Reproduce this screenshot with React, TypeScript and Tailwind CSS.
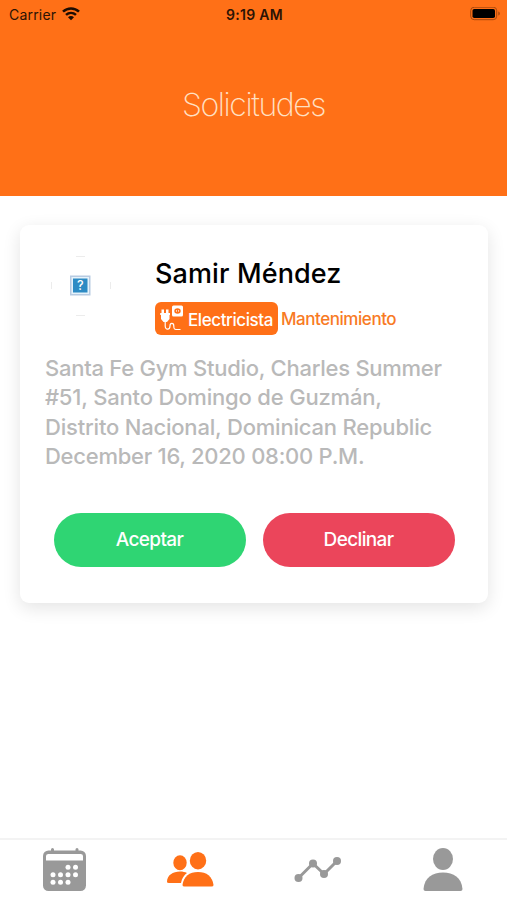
const address = [
	{ text: "Santa Fe Gym Studio, Charles Summer", spacing: "tracking-[-0.26px]" },
	{ text: "#51, Santo Domingo de Guzmán,", spacing: "tracking-[-0.18px]" },
	{ text: "Distrito Nacional, Dominican Republic", spacing: "tracking-[-0.2px]" },
	{ text: "December 16, 2020 08:00 P.M.", spacing: "tracking-[-0.26px]" },
];

const calendarDots = [
	[25.5, 20], [33, 20],
	[10.5, 27.5], [18, 27.5], [25.5, 27.5], [33, 27.5],
	[10.5, 35], [18, 35], [25.5, 35],
];

function StatusBar() {
	return (
		<div className="grid grid-cols-3 items-center h-7 pl-[9px] pr-[7px] text-[14px] text-[#2b1305]">
			<div className="flex items-center gap-[6px]">
				<span className="tracking-[0.2px]">Carrier</span>
				<svg width="18" height="14" viewBox="0 0 18 14" fill="none" stroke="#1d0c02" strokeWidth="2.5">
					<path d="M1 4.7C5.5.3 12.5.3 17 4.7" />
					<path d="M4 7.9c2.9-2.7 7.1-2.7 10 0" />
					<path d="M6 10.3c1.700-1.700 4.300-1.700 6 0L9 13.300z" fill="#1d0c02" stroke="none" />
				</svg>
			</div>
			<span className="text-center font-semibold whitespace-nowrap tracking-[0.3px]">9:19 AM</span>
			<svg className="justify-self-end" width="30" height="14" viewBox="0 0 30 14">
				<rect x="0.7" y="0.2" width="26" height="12.5" rx="3.5" fill="none" stroke="#a5480f" />
				<rect x="2.5" y="2" width="22.5" height="9" rx="1.8" fill="#000" />
				<path d="M28.3 4.5c2 .7 2 3.400 0 4.100z" fill="#a5480f" />
			</svg>
		</div>
	);
}

function PlugIcon() {
	return (
		<svg width="25" height="26" viewBox="0 0 25 26" fill="#fff">
			<path d="M2.500 4.500h2.500v3.500h2V4.500h2.500v3.500h1.500v2h-.5v4L8 17H4.500L2 14v-4h-.8V8h1.300z" />
			<path d="M6.200 16v5c0 4.500 4.800 4 4.800 0 0-3.500 3.800-3.500 3.800 0 0 3 .5 3.500 2.200 3.500h4.500" fill="none" stroke="#fff" strokeWidth="1.200" />
			<rect x="13" y="0.500" width="11" height="11" rx="1.500" />
			<ellipse cx="18.500" cy="6" rx="3.200" ry="2.700" fill="#ff7017" />
			<path d="M17.500 5v1.800M19.500 5v1.800" stroke="#fff" strokeWidth="0.700" />
		</svg>
	);
}

function Avatar() {
	return (
		<svg width="60" height="60" viewBox="0 0 60 60">
			<path d="M25 .5h9M25 59.500h9M.5 26v7M59.500 26v7" stroke="#ececec" />
			<rect x="19" y="19.500" width="20.500" height="20" fill="#b8cbe2" />
			<rect x="20.500" y="21" width="17.500" height="17" fill="#e6f3fb" />
			<rect x="22" y="22.500" width="14.500" height="14" fill="#2d8bc4" />
			<text x="29.300" y="34" textAnchor="middle" fontSize="12.500" fontWeight="500" fill="#fff" fontFamily="Inter, sans-serif">?</text>
		</svg>
	);
}

function RequestCard() {
	return (
		<section className="mx-5 mt-[29px] w-[468px] h-[378px] rounded-[9px] bg-white shadow-[0_5px_18px_rgba(0,0,0,0.11)]">
			<div className="flex pl-[31px] pt-[31px]">
				<Avatar />
				<div className="ml-[44px]">
					<h2 className="pt-px text-[27px] leading-[34px] font-medium text-black tracking-[0.12px] whitespace-nowrap">
						Samir Méndez
					</h2>
					<div className="flex items-center mt-[11px] whitespace-nowrap">
						<div className="flex items-center w-[123px] h-[33px] rounded-[6px] bg-[#ff7017] pl-1 pb-px">
							<PlugIcon />
							<span className="ml-[4px] pt-[3px] text-[17px] leading-5 font-medium text-white tracking-[-0.42px]">Electricista</span>
						</div>
						<span className="ml-[3px] text-[17px] leading-5 font-medium text-[#f87a24] tracking-[-0.45px]">Mantenimiento</span>
					</div>
				</div>
			</div>
			<div className="mt-[19px] pl-[25px] text-[22px] leading-[29.3px] font-medium text-[#b9b9b9] whitespace-nowrap">
				{address.map((line) => (
					<p key={line.text} className={line.spacing}>
						{line.text}
					</p>
				))}
			</div>
			<div className="flex gap-[17px] mt-[42px] pl-[33.5px] text-[19px] font-medium text-white tracking-[-0.65px]">
				<button className="w-[192px] h-[54px] rounded-full bg-[#2fd573]">Aceptar</button>
				<button className="w-[192px] h-[54px] rounded-full bg-[#eb455b]">Declinar</button>
			</div>
		</section>
	);
}

function TabBar() {
	return (
		<nav className="flex h-[62px] border-t-2 border-[#f3f3f3] bg-white text-[#999]">
			<svg className="ml-[43px] mt-2" width="44" height="44" viewBox="0 0 44 44" fill="currentColor">
				<path d="M9.500 1.500v3M34 1.500v3" stroke="currentColor" strokeWidth="3" strokeLinecap="round" />
				<rect y="2.500" width="43" height="40.500" rx="5.500" />
				<path d="M3 8q0-2 2.500-2h32Q40 6 40 8v4.500H3z" fill="#fff" />
				{calendarDots.map(([x, y]) => (
					<circle key={`${x}-${y}`} cx={x - 0.5} cy={y - 0.8} r="2.500" fill="#fff" />
				))}
			</svg>
			<svg className="ml-[80px] mt-3" width="47" height="36" viewBox="0 0 47 36" fill="#ff7017">
				<ellipse cx="13" cy="10.700" rx="6.700" ry="7.500" />
				<ellipse cx="31" cy="8.700" rx="8.200" ry="8.700" />
				<path d="M0 30c0-7 6-10.500 13-10.500 3 0 5 .5 7 1.500-3 2-5 5-6 10H2q-2 0-2-1z" />
				<path d="M15.500 33c1-8.500 7-13 15.500-13s14.500 4.500 15.500 13q0 1.500-2 1.500h-27q-2 0-2-1.500z" />
			</svg>
			<svg className="ml-[79px] mt-4" width="48" height="28" viewBox="0 0 48 28" fill="currentColor">
				<path d="M5.500 22 20 7.500 31 18 44 5" fill="none" stroke="currentColor" strokeWidth="3" />
				<circle cx="5.500" cy="22" r="4" />
				<circle cx="20" cy="7.500" r="4" />
				<circle cx="31" cy="18" r="4" />
				<circle cx="44" cy="5" r="4" />
			</svg>
			<svg className="ml-[82px] mt-2" width="40" height="44" viewBox="0 0 40 44" fill="currentColor">
				<ellipse cx="20" cy="11" rx="10" ry="11" />
				<path d="M.5 41C1.500 29.500 9.500 24.500 20 24.500S38.500 29.500 39.500 41q0 2-2 2h-35q-2 0-2-2z" />
			</svg>
		</nav>
	);
}

export default function App() {
	return (
		<div className="flex flex-col w-[507px] h-[900px] bg-white overflow-hidden font-['Inter','Liberation_Sans',sans-serif]">
			<header className="h-[196px] bg-[#ff7017]">
				<StatusBar />
				<h1 className="mt-[57px] text-center text-[32px] leading-10 font-extralight text-[#ffe0c4] tracking-[-1.4px]">
					Solicitudes
				</h1>
			</header>
			<main className="flex-1">
				<RequestCard />
			</main>
			<TabBar />
		</div>
	);
}
